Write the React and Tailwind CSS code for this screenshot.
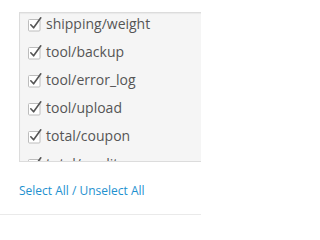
import React from "react";

const items = [
  "shipping/weight",
  "tool/backup",
  "tool/error_log",
  "tool/upload",
  "total/coupon",
  "total/credit",
];

function Check() {
  return (
    <svg width="16" height="16" viewBox="0 0 16 16" className="shrink-0">
      <rect x="0.5" y="3.5" width="11.5" height="11.5" rx="1" fill="#fff" stroke="#bdbdbd" />
      <path d="M2.8 8.8 L5.6 11.8 L12.8 1.8" fill="none" stroke="#555" strokeWidth="1.6" strokeLinecap="round" strokeLinejoin="round" />
    </svg>
  );
}

export default function App() {
  return (
    <div className="w-[201px] h-[218px] bg-white overflow-hidden" style={{ fontFamily: '"Open Sans", sans-serif' }}>
      <div className="pl-[19px] pt-[12px]">
        <div className="h-[150px] w-[200px] border border-[#dcdcdc] bg-[#f5f5f5] overflow-hidden shadow-[inset_0_1px_1px_rgba(0,0,0,0.05)]">
          <div className="-mt-[3px] pl-[8px]">
            {items.map((t) => (
              <div key={t} className="h-[28px] flex items-center gap-[2px] text-[14px] text-[#555]">
                <Check />
                <span className="leading-none">{t}</span>
              </div>
            ))}
          </div>
        </div>
        <div className="mt-[19px] text-[12px] text-[#1e91cf] leading-[20px]">
          <span>Select All</span> / <span>Unselect All</span>
        </div>
      </div>
      <div className="mt-[13px] h-px bg-[#eaeaea]" />
    </div>
  );
}
